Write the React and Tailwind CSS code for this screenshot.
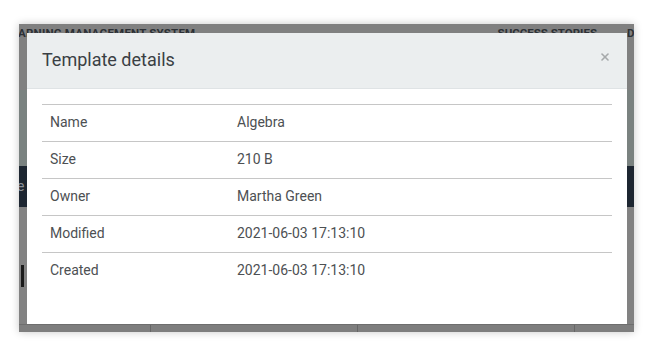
import { X } from 'lucide-react';

const rows = [
  ['Name', 'Algebra'],
  ['Size', '210 B'],
  ['Owner', 'Martha Green'],
  ['Modified', '2021-06-03 17:13:10'],
  ['Created', '2021-06-03 17:13:10'],
];

function BackgroundPage() {
  return (
    <div className="flex flex-col h-full">
      <div className="h-[66px] flex items-start justify-between text-[11.5px] font-bold text-[#2c3035] leading-none pt-[4px]">
        <span className="-ml-[14px] tracking-[0.2px]">LEARNING MANAGEMENT SYSTEM</span>
        <div className="flex gap-[30px]">
          <span>SUCCESS STORIES</span>
          <span className="-mr-[7px]">DE</span>
        </div>
      </div>
      <div className="h-[76px] bg-[#7a8280]" />
      <div className="h-[41px] bg-[#1d2631] flex items-center text-[14px] text-[#8b9098]">
        <span className="-ml-[18px]">The s</span>
      </div>
      <div className="flex-1 bg-[#828282] pt-[58px] pl-[2px]">
        <div className="w-[3px] h-[22px] bg-[#1a1a1a]" />
      </div>
      <div className="h-[8px] flex bg-[#7e7e7e] border-t border-[#6e6e6e]">
        <div className="w-[132px] border-r border-[#666]" />
        <div className="w-[207px] border-r border-[#666]" />
        <div className="w-[217px] border-r border-[#666]" />
      </div>
    </div>
  );
}

export default function App() {
  return (
    <div
      className="w-[653px] h-[356px] bg-white pt-[24px] pl-[19px]"
      style={{ fontFamily: 'Roboto, "Noto Sans", sans-serif' }}
    >
      <div className="relative w-[615px] h-[308px] overflow-hidden bg-[#808080] shadow-[0_0_8px_rgba(0,0,0,0.22)]">
        <BackgroundPage />
        <div className="absolute left-[8px] top-[9px] w-[600px] h-[291px] bg-white flex flex-col">
          <div className="h-[56px] bg-[#ebeeef] border-b border-[#dfe3e5] flex items-center justify-between pl-[15px] pr-[16px]">
            <h2 className="text-[18px] text-[#3a3f44] font-normal pb-[2px]">Template details</h2>
            <X className="w-[12px] h-[12px] text-[#a6a9ab] -mt-[7px]" strokeWidth={3.2} />
          </div>
          <div className="px-[15px] pt-[15px]">
            <div className="w-full text-[14px] text-[#4d5053]">
              {rows.map(([label, value]) => (
                <div key={label} className="flex items-center h-[37px] border-t border-[#c6c6c6] pb-[1px]">
                  <div className="w-[195px] pl-[8px]">{label}</div>
                  <div className="flex-1">{value}</div>
                </div>
              ))}
            </div>
          </div>
        </div>
      </div>
    </div>
  );
}
